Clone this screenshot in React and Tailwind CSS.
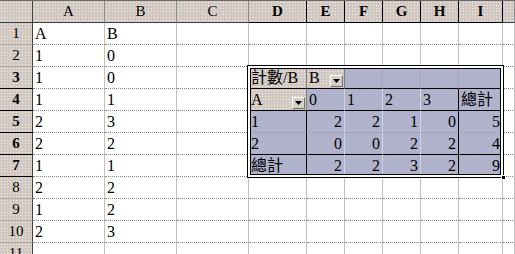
import React from 'react';

const font = "font-['Liberation_Serif','Noto_Sans_CJK_TC',serif]";
const hdrBg =
  'bg-[#d1c8c6] bg-[radial-gradient(circle,#f4f0c8_0.7px,transparent_0.9px)] bg-[length:3px_3px]';
const blueBg =
  'bg-[#a3a5c3] bg-[radial-gradient(circle,#bfc1d6_0.6px,transparent_0.8px)] bg-[length:2px_2px]';

const cols = [
  { id: 'A', w: 'w-[72px]' },
  { id: 'B', w: 'w-[72px]' },
  { id: 'C', w: 'w-[72px]' },
  { id: 'D', w: 'w-[58px]', sel: true },
  { id: 'E', w: 'w-[38px]', sel: true },
  { id: 'F', w: 'w-[38px]', sel: true },
  { id: 'G', w: 'w-[38px]', sel: true },
  { id: 'H', w: 'w-[38px]', sel: true },
  { id: 'I', w: 'w-[44px]', sel: true },
  { id: '', w: 'flex-1' },
];

const data = [
  ['A', 'B'],
  ['1', '0'],
  ['1', '0'],
  ['1', '1'],
  ['2', '3'],
  ['2', '2'],
  ['1', '1'],
  ['2', '2'],
  ['1', '2'],
  ['2', '3'],
  ['', ''],
];

// pivot table sits in D3:I7
const pivot = {
  3: { D: { t: '計數/B', field: true }, E: { t: 'B', field: true, dd: true }, F: {}, G: {}, H: {}, I: {} },
  4: { D: { t: 'A', field: true, dd: true }, E: { t: '0' }, F: { t: '1' }, G: { t: '2' }, H: { t: '3' }, I: { t: '總計' } },
  5: { D: { t: '1' }, E: { t: '2', r: true }, F: { t: '2', r: true }, G: { t: '1', r: true }, H: { t: '0', r: true }, I: { t: '5', r: true } },
  6: { D: { t: '2' }, E: { t: '0', r: true }, F: { t: '0', r: true }, G: { t: '2', r: true }, H: { t: '2', r: true }, I: { t: '4', r: true } },
  7: { D: { t: '總計' }, E: { t: '2', r: true }, F: { t: '2', r: true }, G: { t: '3', r: true }, H: { t: '2', r: true }, I: { t: '9', r: true } },
};

function DropButton() {
  return (
    <span className="ml-auto mb-[1px] flex h-[12px] w-[13px] shrink-0 items-center justify-center border-l border-t border-white border-r border-b border-r-[#707070] border-b-[#707070] bg-[#d4d0c8]">
      <svg width="7" height="4" viewBox="0 0 7 4">
        <path d="M0 0h7L3.5 4z" fill="#000" />
      </svg>
    </span>
  );
}

function PivotCell({ row, col, cell }) {
  let right = 'border-r-[#d2d2e2]';
  if (row === 3 && !cell.field) right = 'border-r-[#a3a5c3]';
  if (row >= 4 && (col.id === 'D' || col.id === 'H' || col.id === 'I')) right = 'border-r-black';
  if (cell.field) right = 'border-r-[#808080]';

  let bottom = 'border-b-[#a3a5c3]';
  if (row === 3 || row === 4 || row === 6 || row === 7) bottom = 'border-b-black';

  return (
    <div
      className={`${col.w} flex h-full items-end border-r border-b ${right} ${bottom} ${cell.field ? hdrBg : blueBg} ${
        cell.r ? 'justify-end pr-[2px]' : 'pl-[2px] pr-[1px]'
      }`}
    >
      <span className="pb-[2px] leading-none">{cell.t}</span>
      {cell.dd && <DropButton />}
    </div>
  );
}

export default function App() {
  return (
    <div className={`h-[254px] w-[515px] overflow-hidden bg-white text-black ${font} relative`}>
      {/* column headers */}
      <div className="flex h-[23px] border-t border-[#6b6b6b]">
        <div className={`w-[33px] border-r border-b border-r-[#404040] border-b-[#404040] ${hdrBg}`} />
        {cols.map((c, i) => (
          <div
            key={i}
            className={`${c.w} flex items-center justify-center border-r border-b text-[15px] leading-none ${hdrBg} ${
              c.sel ? 'font-bold border-r-black border-b-black' : 'border-r-[#8c8c8c] border-b-[#404040]'
            }`}
          >
            {c.id}
          </div>
        ))}
      </div>

      {/* rows */}
      {data.map((vals, idx) => {
        const row = idx + 1;
        const sel = row >= 3 && row <= 7;
        return (
          <div key={row} className="flex h-[22px] text-[16px]">
            <div
              className={`flex w-[33px] items-center justify-center border-r border-b border-r-[#404040] text-[15px] leading-none ${hdrBg} ${
                sel ? 'font-bold border-b-black' : 'border-b-[#b0a8a8]'
              }`}
            >
              {row}
            </div>
            {cols.map((c, ci) => {
              const cell = pivot[row] && pivot[row][c.id];
              if (cell) return <PivotCell key={ci} row={row} col={c} cell={cell} />;
              const text = ci < 2 ? vals[ci] : '';
              return (
                <div
                  key={ci}
                  className={`${c.w} flex h-full items-end border-r border-b border-dotted border-b-[#8a8a8a] border-r-[#c0c0c0] pl-[2px] [border-right-style:solid]`}
                >
                  <span className="pb-[2px] leading-none">{text}</span>
                </div>
              );
            })}
          </div>
        );
      })}

      {/* pivot selection frame */}
      <div className="pointer-events-none absolute left-[247px] top-[65px] h-[113px] w-[257px] border border-black shadow-[inset_0_0_0_2px_white,inset_0_0_0_3px_black]" />
      <div className="absolute left-[501px] top-[175px] h-[5px] w-[5px] border border-white bg-black" />
    </div>
  );
}
